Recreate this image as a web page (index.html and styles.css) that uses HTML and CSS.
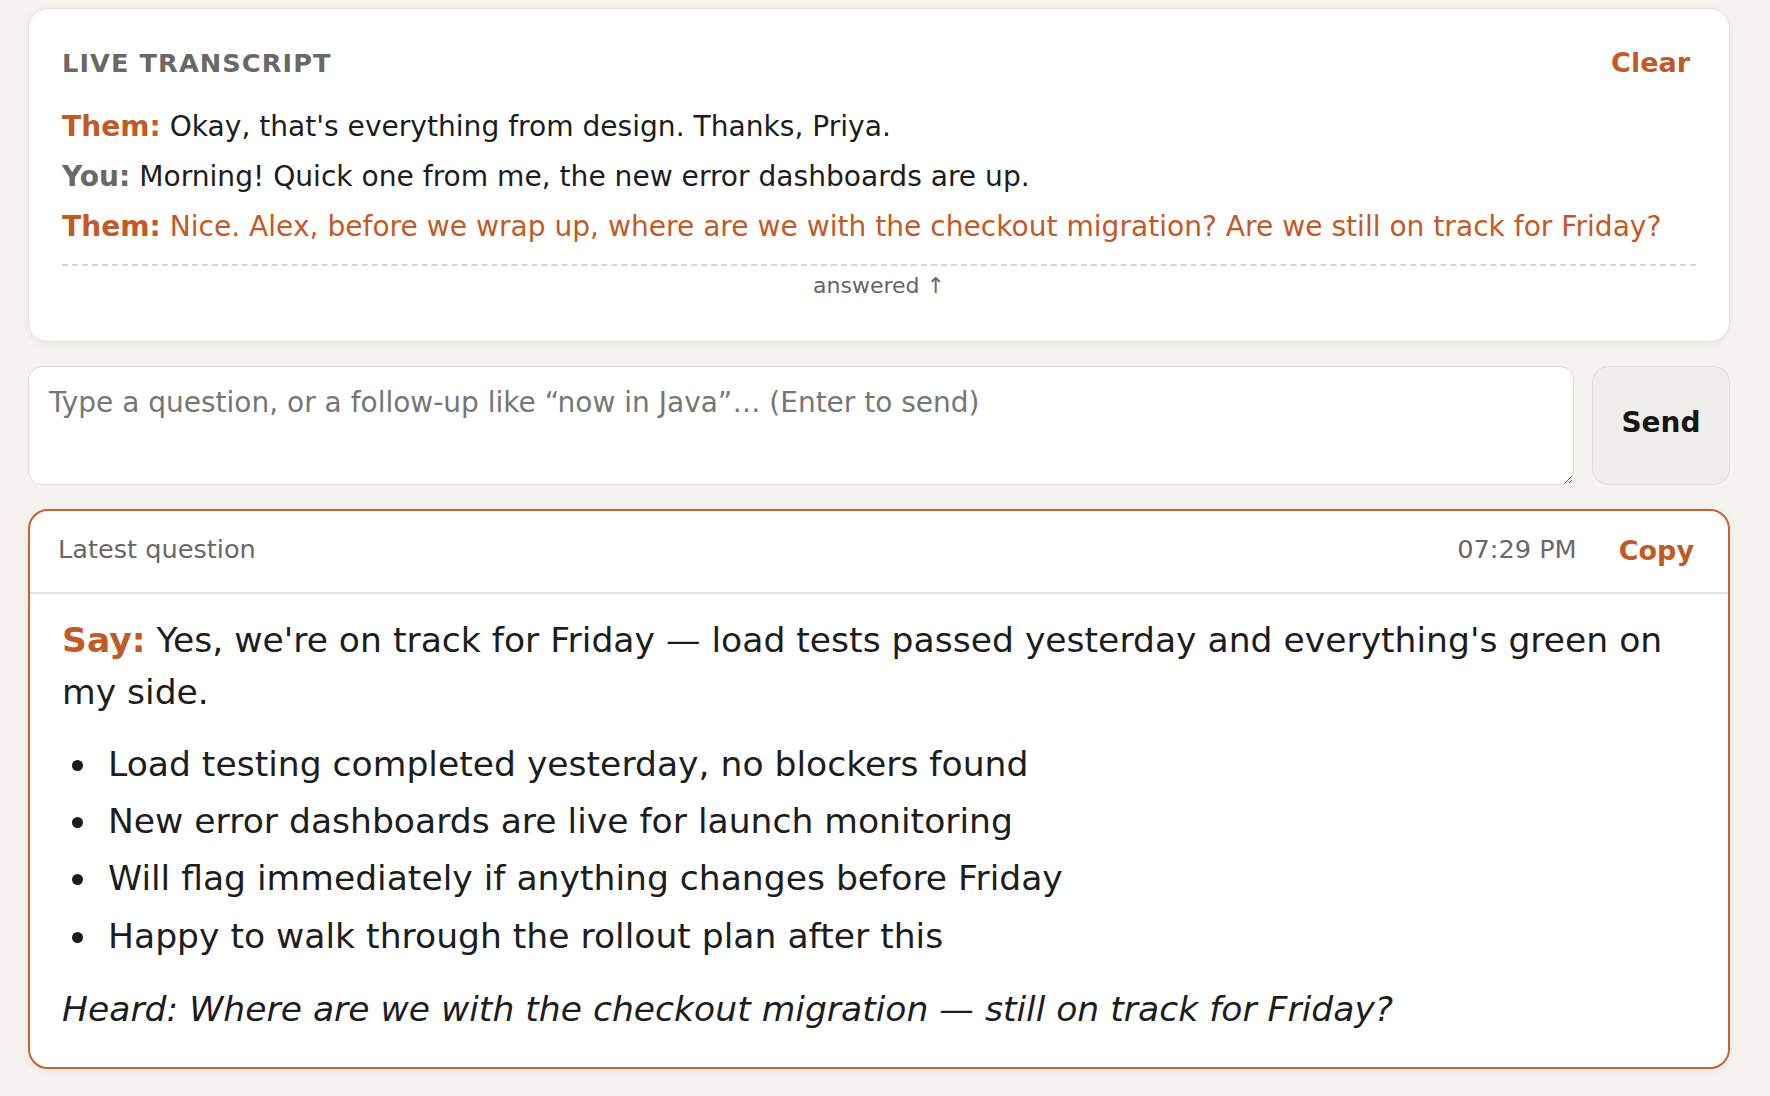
FILE: index.html
```html
<!DOCTYPE html>
<html lang="en">
<head>
    <meta charset="UTF-8">
    <meta name="viewport" content="width=device-width, initial-scale=1.0">
    <title>Meeting Copilot</title>
    <link rel="stylesheet" href="styles.css">
</head>
<body>

    <div class="app">

        <!-- Live transcript -->
        <section class="panel transcript">
            <div class="panel-head">
                <h2 class="label">Live transcript</h2>
                <button class="link-btn">Clear</button>
            </div>
            <p class="line"><span class="who them">Them:</span> Okay, that's everything from design. Thanks, Priya.</p>
            <p class="line"><span class="who you">You:</span> Morning! Quick one from me, the new error dashboards are up.</p>
            <p class="line question"><span class="who them">Them:</span> Nice. Alex, before we wrap up, where are we with the checkout migration? Are we still on track for Friday?</p>
            <div class="answered">answered ↑</div>
        </section>

        <!-- Ask box -->
        <div class="ask">
            <textarea placeholder="Type a question, or a follow-up like “now in Java”… (Enter to send)"></textarea>
            <button class="send">Send</button>
        </div>

        <!-- Latest answer -->
        <section class="answer">
            <div class="answer-head">
                <span>Latest question</span>
                <span class="time">07:29 PM</span>
                <button class="link-btn small">Copy</button>
            </div>
            <div class="answer-body">
                <p class="say"><strong>Say:</strong> Yes, we're on track for Friday — load tests passed yesterday and everything's green on my side.</p>
                <ul>
                    <li>Load testing completed yesterday, no blockers found</li>
                    <li>New error dashboards are live for launch monitoring</li>
                    <li>Will flag immediately if anything changes before Friday</li>
                    <li>Happy to walk through the rollout plan after this</li>
                </ul>
                <p class="heard">Heard: Where are we with the checkout migration — still on track for Friday?</p>
            </div>
        </section>

    </div>

</body>
</html>
```

FILE: styles.css
```css
body {
    margin: 0;
    background-color: #f4f3f0;
    color: #1d1d1d;
    font-family: "DejaVu Sans", sans-serif;
}
.app {
    display: flex;
    flex-direction: column;
    gap: 24px;
    padding: 8px 40px 16px 28px;
}
.panel {
    background-color: #ffffff;
    border: 1px solid #e4e1dc;
    border-radius: 20px;
    padding: 32px 33px 36px;
    box-shadow: 0 2px 8px rgba(0, 0, 0, 0.06);
}
.panel-head {
    display: flex;
    align-items: center;
    justify-content: space-between;
    margin-bottom: 18px;
}
.label {
    margin: 0;
    font-size: 25.6px;
    font-weight: bold;
    letter-spacing: 1.1px;
    text-transform: uppercase;
    color: #696866;
}
.link-btn {
    background: none;
    border: none;
    padding: 6px 8px;
    margin-right: -2px;
    font-family: inherit;
    font-size: 27px;
    font-weight: bold;
    color: #c25a26;
    cursor: pointer;
}
.link-btn.small {
    padding: 6px 8px 2px;
    margin-right: 0;
}
.line {
    margin: 0;
    font-size: 28.1px;
    line-height: 50px;
}
.who {
    font-weight: bold;
}
.them {
    color: #c25a26;
}
.you {
    color: #696866;
}
.question {
    color: #c25a26;
    padding-bottom: 12px;
    border-bottom: 2px dashed #d6d6d6;
}
.answered {
    margin: 7px 0;
    text-align: center;
    font-size: 22px;
    color: #666666;
}
.ask {
    display: flex;
    gap: 18px;
}
.ask textarea {
    flex: 1;
    min-width: 0;
    height: 119px;
    box-sizing: border-box;
    padding: 16px 20px 12px;
    background-color: #ffffff;
    border: 1px solid #dcd9d4;
    border-radius: 14px;
    font-family: "DejaVu Sans", sans-serif;
    font-size: 28px;
    line-height: 1.45;
    color: #1d1d1d;
    resize: vertical;
}
.ask textarea::placeholder {
    color: #767676;
}
.send {
    width: 138px;
    height: 119px;
    box-sizing: border-box;
    padding: 0 0 6px;
    background-color: #efeeeb;
    border: 1px solid #e1dfda;
    border-radius: 16px;
    font-family: "DejaVu Sans", sans-serif;
    font-size: 28px;
    font-weight: bold;
    color: #161616;
    cursor: pointer;
}
.answer {
    background-color: #ffffff;
    border: 2px solid #c8622e;
    border-radius: 20px;
    box-shadow: 0 2px 8px rgba(0, 0, 0, 0.06);
    overflow: hidden;
}
.answer-head {
    display: flex;
    align-items: center;
    padding: 18px 26px 24px 28px;
    border-bottom: 2px solid #e6e4e0;
    font-size: 25.6px;
    color: #696866;
}
.answer-head .time {
    margin-left: auto;
    margin-right: 34px;
}
.answer-body {
    padding: 21px 32px 31px;
    font-size: 34.55px;
    line-height: 1.5;
}
.say {
    margin: 0;
}
.say strong {
    color: #c25a26;
}
.answer-body ul {
    margin: 20px 0 21.5px;
    padding-left: 38px;
}
.answer-body li {
    margin-bottom: 5.5px;
    padding-left: 8px;
}
.heard {
    margin: 0;
    font-style: italic;
}
```
